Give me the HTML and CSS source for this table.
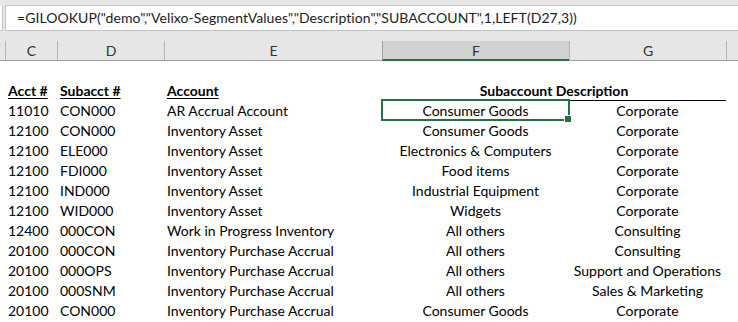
FILE: index.html
```html
<!DOCTYPE html>
<html>
<head>
<meta charset="utf-8">
<link rel="stylesheet" href="styles.css">
</head>
<body>
<div class="app">
  <div class="formula-bar">
    <div class="fx-stub"></div>
    <div class="formula-input">=GILOOKUP("demo","Velixo-SegmentValues","Description","SUBACCOUNT",1,LEFT(D27,3))</div>
  </div>
  <div class="grid col-heads">
    <div class="ch corner"></div>
    <div class="ch">C</div>
    <div class="ch">D</div>
    <div class="ch">E</div>
    <div class="ch sel">F</div>
    <div class="ch">G</div>
    <div class="ch rest"></div>
  </div>
  <div class="sheet">
    <div class="grid row blank"></div>
    <div class="grid row head">
      <div class="c"></div>
      <div class="c l"><span class="u">Acct #</span></div>
      <div class="c l"><span class="u">Subacct #</span></div>
      <div class="c l"><span class="u">Account</span></div>
      <div class="c m span2 ruled">Subaccount Description</div>
    </div>
    <div class="grid row">
      <div class="c"></div><div class="c l">11010</div><div class="c l">CON000</div><div class="c l">AR Accrual Account</div><div class="c m active">Consumer Goods</div><div class="c m">Corporate</div>
    </div>
    <div class="grid row">
      <div class="c"></div><div class="c l">12100</div><div class="c l">CON000</div><div class="c l">Inventory Asset</div><div class="c m">Consumer Goods</div><div class="c m">Corporate</div>
    </div>
    <div class="grid row">
      <div class="c"></div><div class="c l">12100</div><div class="c l">ELE000</div><div class="c l">Inventory Asset</div><div class="c m">Electronics &amp; Computers</div><div class="c m">Corporate</div>
    </div>
    <div class="grid row">
      <div class="c"></div><div class="c l">12100</div><div class="c l">FDI000</div><div class="c l">Inventory Asset</div><div class="c m">Food items</div><div class="c m">Corporate</div>
    </div>
    <div class="grid row">
      <div class="c"></div><div class="c l">12100</div><div class="c l">IND000</div><div class="c l">Inventory Asset</div><div class="c m">Industrial Equipment</div><div class="c m">Corporate</div>
    </div>
    <div class="grid row">
      <div class="c"></div><div class="c l">12100</div><div class="c l">WID000</div><div class="c l">Inventory Asset</div><div class="c m">Widgets</div><div class="c m">Corporate</div>
    </div>
    <div class="grid row">
      <div class="c"></div><div class="c l">12400</div><div class="c l">000CON</div><div class="c l">Work in Progress Inventory</div><div class="c m">All others</div><div class="c m">Consulting</div>
    </div>
    <div class="grid row">
      <div class="c"></div><div class="c l">20100</div><div class="c l">000CON</div><div class="c l">Inventory Purchase Accrual</div><div class="c m">All others</div><div class="c m">Consulting</div>
    </div>
    <div class="grid row">
      <div class="c"></div><div class="c l">20100</div><div class="c l">000OPS</div><div class="c l">Inventory Purchase Accrual</div><div class="c m">All others</div><div class="c m">Support and Operations</div>
    </div>
    <div class="grid row">
      <div class="c"></div><div class="c l">20100</div><div class="c l">000SNM</div><div class="c l">Inventory Purchase Accrual</div><div class="c m">All others</div><div class="c m">Sales &amp; Marketing</div>
    </div>
    <div class="grid row">
      <div class="c"></div><div class="c l">20100</div><div class="c l">CON000</div><div class="c l">Inventory Purchase Accrual</div><div class="c m">Consumer Goods</div><div class="c m">Corporate</div>
    </div>
  </div>
</div>
</body>
</html>
```

FILE: styles.css
```css
* { box-sizing: border-box; }
html, body { margin: 0; padding: 0; background: #fff; }
body {
  font-family: Lato, "Open Sans", sans-serif;
  font-size: 14px;
  color: #000;
  width: 738px;
  height: 322px;
  overflow: hidden;
}
.app { display: flex; flex-direction: column; }

.formula-bar {
  background: #e6e6e6;
  height: 41px;
  padding-top: 5px;
  display: flex;
  align-items: flex-start;
}
.fx-stub {
  width: 3px;
  height: 26px;
  background: #fff;
  border-right: 1px solid #c6c6c6;
  border-bottom: 1px solid #c6c6c6;
  margin-right: 2px;
}
.formula-input {
  flex: 1;
  height: 26px;
  background: #fff;
  border: 1px solid #c6c6c6;
  border-right: none;
  padding-left: 11px;
  line-height: 24px;
  color: #222;
  letter-spacing: 0.06px;
  white-space: nowrap;
  overflow: hidden;
}

.grid {
  display: grid;
  grid-template-columns: 5px 52px 107px 218px 187px 157px 12px;
}

.col-heads {
  height: 20px;
  background: #e6e6e6;
  border-bottom: 1px solid #9e9e9e;
}
.ch {
  border-left: 1px solid #b4b4b4;
  text-align: center;
  line-height: 19px;
  color: #333;
  height: 19px;
}
.ch.corner { border-left: none; }
.ch.sel {
  background: #d2d2d2;
  border-left-color: #a0a0a0;
  height: 20px;
  border-bottom: 2px solid #217346;
  margin-bottom: -1px;
  line-height: 19px;
}

.row { height: 20px; }
.row.blank { height: 19px; }
.c {
  height: 20px;
  line-height: 22px;
  white-space: nowrap;
  position: relative;
}
.c.l { padding-left: 3px; }
.c.m { text-align: center; }
.span2 { grid-column: span 2; }
.head .c { font-weight: 700; }
.u {
  text-decoration: underline;
  text-underline-offset: 2px;
}
.ruled { box-shadow: 0 1px 0 #000; }

.active::after {
  content: "";
  position: absolute;
  left: -1px;
  top: -1px;
  right: -1px;
  bottom: -1px;
  border: 2px solid #217346;
}
.active::before {
  content: "";
  position: absolute;
  right: -3px;
  bottom: -3px;
  width: 6px;
  height: 6px;
  background: #217346;
  border: 1px solid #fff;
  z-index: 1;
}
```
